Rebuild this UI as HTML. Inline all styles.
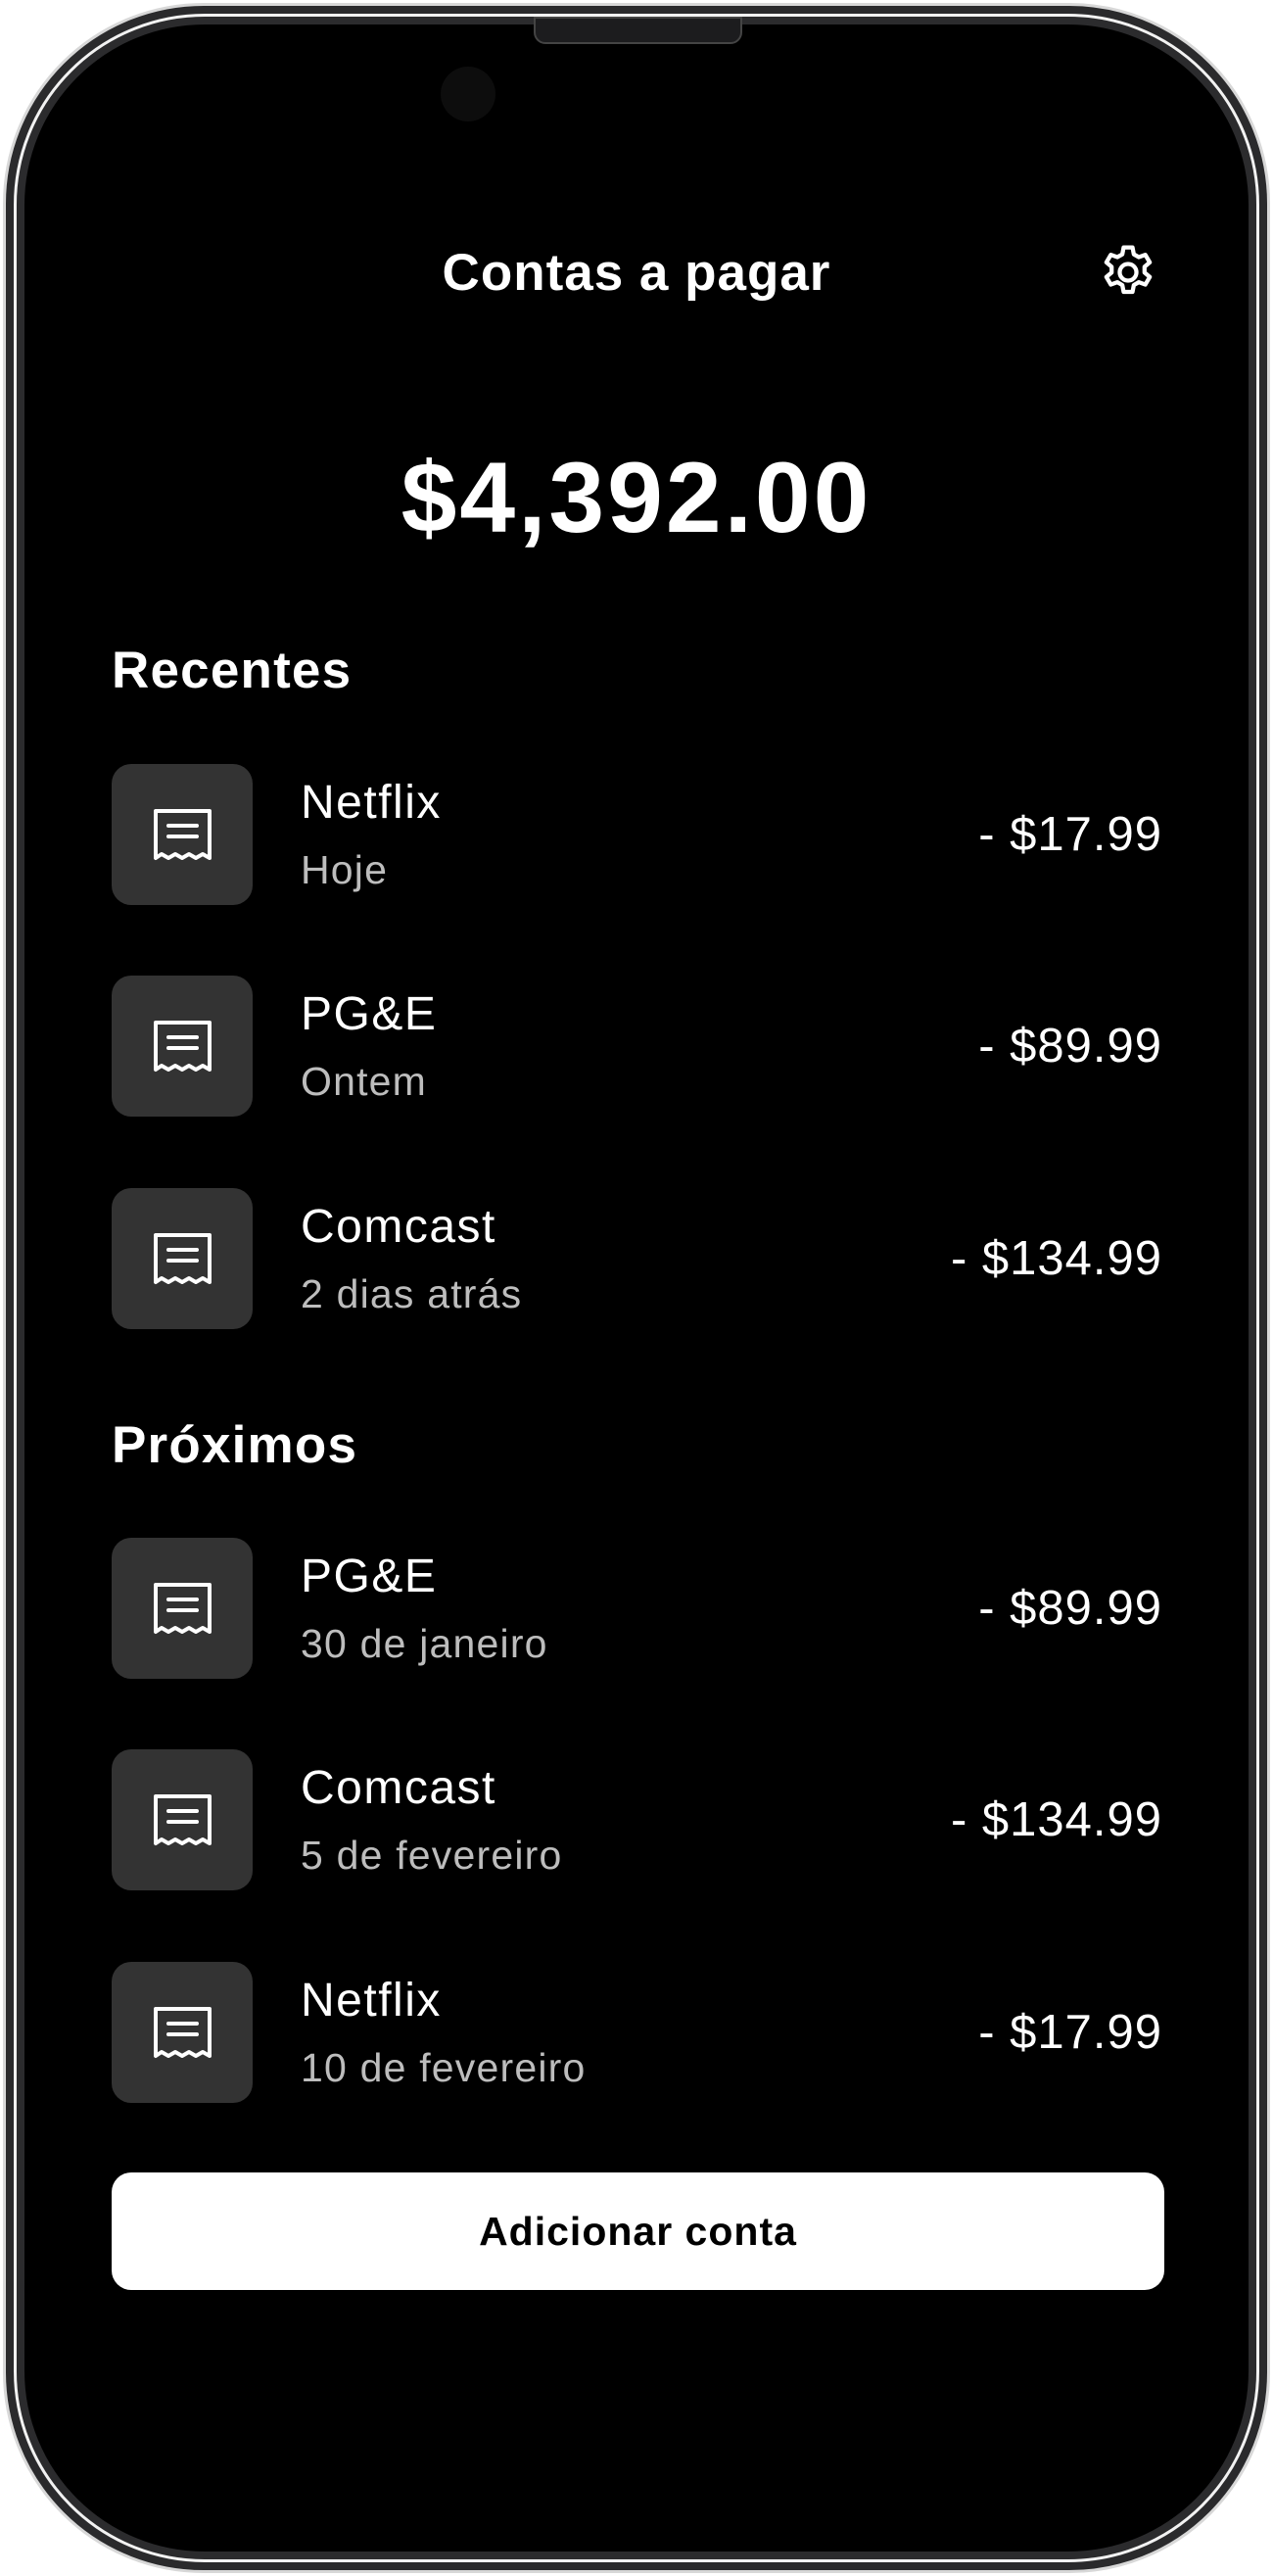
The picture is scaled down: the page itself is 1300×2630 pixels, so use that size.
<!DOCTYPE html>
<html><head><meta charset="utf-8"><style>
*{margin:0;padding:0;box-sizing:border-box}
body{width:1300px;height:2630px;background:#fff;position:relative;overflow:hidden;font-family:"Liberation Sans",sans-serif;color:#fff}
.frame{position:absolute;left:3px;top:3px;width:1294px;height:2624px;border-radius:205px;background:#2a2a2c;border:3px solid #d8d8d8}
.frame2{position:absolute;left:14px;top:14px;width:1272px;height:2602px;border-radius:195px;background:#000;border:3px solid #f2f2f2;box-shadow:inset 0 0 0 8px #2b2b2d}
.scr{position:absolute;left:26px;top:26px;width:1248px;height:2578px;border-radius:185px;background:#000}
.notch{position:absolute;left:545px;top:17px;width:213px;height:28px;background:#1c1c1e;border-radius:0 0 12px 12px;border:2px solid #444}
.cam{position:absolute;left:450px;top:68px;width:56px;height:56px;border-radius:50%;background:#0d0d0d}
.a{position:absolute;white-space:nowrap}
.title{left:0;width:1300px;text-align:center;top:248px;font-size:53px;font-weight:bold;letter-spacing:1px}
.total{left:0;width:1300px;text-align:center;top:450px;font-size:102px;font-weight:bold;letter-spacing:3px}
.h{left:114px;font-size:53px;font-weight:bold;letter-spacing:1.2px}
.box{position:absolute;left:114px;width:144px;height:144px;border-radius:20px;background:#333}
.nm{left:307px;font-size:48px;letter-spacing:1.5px}
.sb{left:307px;font-size:41px;color:#bdbdbd;letter-spacing:1.2px}
.am{right:113px;font-size:49px;text-align:right;letter-spacing:1px}
.btn{position:absolute;left:114px;top:2218px;width:1075px;height:120px;border-radius:20px;background:#fff;color:#000;font-weight:bold;font-size:41px;text-align:center;line-height:120px;letter-spacing:1px}
</style></head><body>
<div class="frame"></div><div class="frame2"></div><div class="scr"></div>
<div class="notch"></div><div class="cam"></div>
<div class="a title">Contas a pagar</div>
<svg class="a" style="left:1120px;top:246px" width="64" height="64" viewBox="0 0 24 24" fill="none" stroke="#fff" stroke-width="1.6" stroke-linejoin="round"><circle cx="12" cy="12" r="3.2"/><path d="M10.3 2.5h3.4l.5 2.6 1.9 1.1 2.5-.9 1.7 2.9-2 1.7v2.2l2 1.7-1.7 2.9-2.5-.9-1.9 1.1-.5 2.6h-3.4l-.5-2.6-1.9-1.1-2.5.9-1.7-2.9 2-1.7v-2.2l-2-1.7 1.7-2.9 2.5.9 1.9-1.1z"/></svg>
<div class="a total">$4,392.00</div>
<div class="a h" style="top:654px">Recentes</div>
<div class="a h" style="top:1445px">Próximos</div>

<div class="box" style="top:780px"><svg width="144" height="144"><path d="M45 96V48H100V96L93 92L86 96L79 92L72 96L65 92L58 96L51 92L45 96Z" fill="none" stroke="#fff" stroke-width="4" stroke-linejoin="round"/><path d="M58 63H87M58 74H87" stroke="#fff" stroke-width="4" stroke-linecap="round"/></svg></div>
<div class="a nm" style="top:792px">Netflix</div><div class="a sb" style="top:865px">Hoje</div><div class="a am" style="top:824px">- $17.99</div>

<div class="box" style="top:996px"><svg width="144" height="144"><path d="M45 96V48H100V96L93 92L86 96L79 92L72 96L65 92L58 96L51 92L45 96Z" fill="none" stroke="#fff" stroke-width="4" stroke-linejoin="round"/><path d="M58 63H87M58 74H87" stroke="#fff" stroke-width="4" stroke-linecap="round"/></svg></div>
<div class="a nm" style="top:1008px">PG&amp;E</div><div class="a sb" style="top:1081px">Ontem</div><div class="a am" style="top:1040px">- $89.99</div>

<div class="box" style="top:1213px"><svg width="144" height="144"><path d="M45 96V48H100V96L93 92L86 96L79 92L72 96L65 92L58 96L51 92L45 96Z" fill="none" stroke="#fff" stroke-width="4" stroke-linejoin="round"/><path d="M58 63H87M58 74H87" stroke="#fff" stroke-width="4" stroke-linecap="round"/></svg></div>
<div class="a nm" style="top:1225px">Comcast</div><div class="a sb" style="top:1298px">2 dias atrás</div><div class="a am" style="top:1257px">- $134.99</div>

<div class="box" style="top:1570px"><svg width="144" height="144"><path d="M45 96V48H100V96L93 92L86 96L79 92L72 96L65 92L58 96L51 92L45 96Z" fill="none" stroke="#fff" stroke-width="4" stroke-linejoin="round"/><path d="M58 63H87M58 74H87" stroke="#fff" stroke-width="4" stroke-linecap="round"/></svg></div>
<div class="a nm" style="top:1582px">PG&amp;E</div><div class="a sb" style="top:1655px">30 de janeiro</div><div class="a am" style="top:1614px">- $89.99</div>

<div class="box" style="top:1786px"><svg width="144" height="144"><path d="M45 96V48H100V96L93 92L86 96L79 92L72 96L65 92L58 96L51 92L45 96Z" fill="none" stroke="#fff" stroke-width="4" stroke-linejoin="round"/><path d="M58 63H87M58 74H87" stroke="#fff" stroke-width="4" stroke-linecap="round"/></svg></div>
<div class="a nm" style="top:1798px">Comcast</div><div class="a sb" style="top:1871px">5 de fevereiro</div><div class="a am" style="top:1830px">- $134.99</div>

<div class="box" style="top:2003px"><svg width="144" height="144"><path d="M45 96V48H100V96L93 92L86 96L79 92L72 96L65 92L58 96L51 92L45 96Z" fill="none" stroke="#fff" stroke-width="4" stroke-linejoin="round"/><path d="M58 63H87M58 74H87" stroke="#fff" stroke-width="4" stroke-linecap="round"/></svg></div>
<div class="a nm" style="top:2015px">Netflix</div><div class="a sb" style="top:2088px">10 de fevereiro</div><div class="a am" style="top:2047px">- $17.99</div>

<div class="btn">Adicionar conta</div>
</body></html>
